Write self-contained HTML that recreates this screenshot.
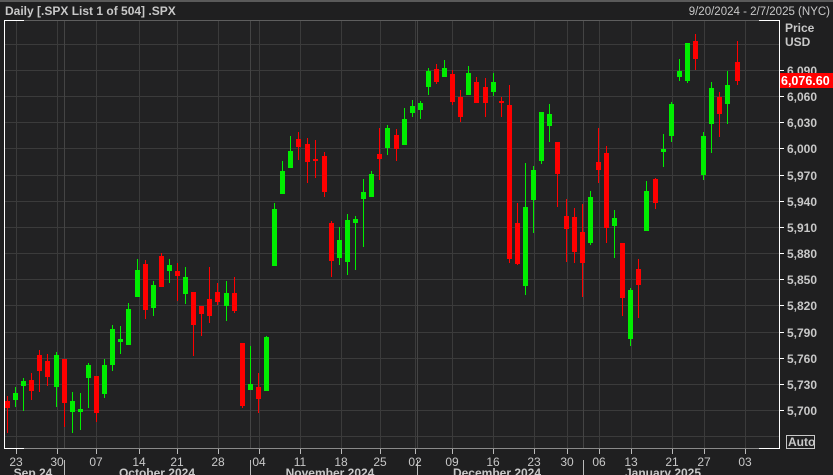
<!DOCTYPE html>
<html><head><meta charset="utf-8"><style>
html,body{margin:0;padding:0;background:#1f1f20;width:833px;height:475px;overflow:hidden}
svg{display:block}
text{font-family:"Liberation Sans",sans-serif;fill:#c8c8c8}
</style></head><body>
<svg id="s" width="833" height="475" xmlns="http://www.w3.org/2000/svg">
<rect x="0" y="0" width="833" height="475" fill="#1f1f20"/>
<rect x="0" y="0" width="833" height="2" fill="#5a5a5a"/>
<rect x="4" y="20" width="775" height="428" fill="#222223"/>
<g id="grid" stroke="#3b3b3b" stroke-width="1"></g>
<g id="c"></g>
<line x1="4" y1="20.5" x2="779" y2="20.5" stroke="#5e5e5e"/>
<line x1="4" y1="448.5" x2="779" y2="448.5" stroke="#8a8a8a"/>
<line x1="4.5" y1="20" x2="4.5" y2="448" stroke="#ffffff"/>
<line x1="4" y1="20.5" x2="24" y2="20.5" stroke="#ffffff"/>
<line x1="4" y1="448.5" x2="24" y2="448.5" stroke="#ffffff"/>
<line x1="759" y1="20.5" x2="779" y2="20.5" stroke="#ffffff"/>
<line x1="759" y1="448.5" x2="779" y2="448.5" stroke="#ffffff"/>
<line x1="779.5" y1="20" x2="779.5" y2="449" stroke="#ffffff"/>
<text x="5" y="15" font-size="12" font-weight="bold" fill="#c0c0c0">Daily [.SPX List 1 of 504] .SPX</text>
<text x="830" y="15" font-size="11.5" text-anchor="end" fill="#b8b8b8">9/20/2024 - 2/7/2025 (NYC)</text>
<text x="785" y="32" font-size="12" font-weight="bold">Price</text>
<text x="785" y="46" font-size="12" font-weight="bold">USD</text>
<g id="ax"></g>
<rect x="780" y="73" width="53" height="15" fill="#ff0000"/>
<text x="781" y="85" font-size="12.5" font-weight="bold" fill="#ffffff" style="fill:#fff">6,076.60</text>
<rect x="786.5" y="435.5" width="28" height="13" fill="none" stroke="#c8c8c8"/>
<text x="788" y="446" font-size="12" font-weight="bold">Auto</text>
</svg>
<script>
var NS="http://www.w3.org/2000/svg";
function el(p,t,a,txt){var e=document.createElementNS(NS,t);for(var k in a)e.setAttribute(k,a[k]);if(txt)e.textContent=txt;document.getElementById(p).appendChild(e);return e;}
var prices=["6,090","6,060","6,030","6,000","5,970","5,940","5,910","5,880","5,850","5,820","5,790","5,760","5,730","5,700"];
for(var i=0;i<15;i++){var y=Math.round(70+i*26.15)+0.5;el("grid","line",{x1:4,y1:y,x2:779,y2:y});
 if(i<14){el("ax","line",{x1:779,y1:y,x2:784,y2:y,stroke:"#fff"});el("ax","text",{x:787,y:y+4.5,"font-size":12,"font-weight":"bold"},prices[i]);}}
el("grid","line",{x1:4,y1:44.5,x2:779,y2:44.5});
var dx=[16,57,96,139,177,218,259,300,341,380,415,452,493,534,567,599,631,672,704,745];
var dl=["23","30","07","14","21","28","04","11","18","25","02","09","16","23","30","06","13","21","27","03"];
for(var i=0;i<dx.length;i++){var x=dx[i]+0.5;el("grid","line",{x1:x,y1:20,x2:x,y2:448});
 el("ax","line",{x1:x,y1:449,x2:x,y2:454,stroke:"#bbb"});el("ax","text",{x:dx[i],y:466,"font-size":12,"text-anchor":"middle"},dl[i]);}
[64,250,417,583].forEach(function(x){el("grid","line",{x1:x+0.5,y1:20,x2:x+0.5,y2:448,stroke:"#444"});el("ax","line",{x1:x+0.5,y1:460,x2:x+0.5,y2:475,stroke:"#bbb"});});
[["Sep 24",33],["October 2024",157],["November 2024",330],["December 2024",497],["January 2025",663]].forEach(function(m){el("ax","text",{x:m[1],y:477,"font-size":12,"font-weight":"bold","text-anchor":"middle"},m[0]);});
var d=[
[7,396,433,401,408,0],[15,387,407,393,400,1],[23,378,411,381,386,1],[31,373,400,380,391,0],[39,350,392,355,371,0],[47,354,386,361,377,0],[56,352,407,355,387,1],[64,359,427,359,403,0],[72,392,433,401,412,1],[80,393,430,409,412,1],[88,363,408,365,378,1],[96,376,422,376,413,0],[104,359,398,365,394,1],[112,325,371,329,365,1],[120,326,354,339,342,1],[128,303,345,309,345,1],[137,259,297,270,297,1],[145,260,319,264,310,0],[153,281,316,285,308,1],[161,253,287,256,287,0],[169,259,283,265,271,1],[177,263,301,271,276,0],[185,267,304,277,294,1],[193,292,356,292,325,0],[201,306,336,306,314,0],[209,267,323,299,316,0],[217,283,305,292,302,0],[226,281,321,293,306,1],[234,277,313,293,311,0],[242,343,408,343,406,0],[250,346,390,384,390,1],[258,373,413,387,399,0],[266,336,391,337,391,1],
[274,203,266,209,266,1],[282,161,194,171,194,1],[290,136,168,151,168,1],[298,132,160,139,147,0],[307,138,183,144,162,0],[315,140,178,159,161,0],[324,152,197,156,192,0],[331,221,277,223,261,0],[339,227,265,240,258,1],[347,214,275,220,262,1],[355,216,270,219,223,1],[363,179,247,192,199,1],[371,171,197,174,197,1],[379,128,180,154,159,0],[387,125,155,128,148,1],[396,129,161,135,149,0],[404,108,145,119,145,1],[412,100,117,106,113,1],[420,101,119,103,110,1],[428,68,95,71,87,1],[436,64,84,69,82,0],[444,60,77,68,77,1],[452,70,105,74,102,0],[460,90,122,97,117,0],[468,66,95,73,95,1],[476,77,103,82,103,0],[485,78,117,87,103,0],[493,73,96,82,92,1],[501,97,117,101,103,0],[509,85,263,105,259,0],[517,203,265,223,264,0],
[525,163,295,207,286,1],[533,166,233,170,200,1],[541,112,164,112,161,1],[549,104,142,114,126,1],[557,142,207,142,174,0],[566,199,262,216,229,0],[574,208,263,217,252,0],[582,204,297,232,263,0],[590,191,245,197,243,1],[598,128,183,162,170,0],[606,146,243,153,228,0],[614,210,258,218,226,1],[622,243,316,243,298,0],[630,288,346,290,339,1],[638,259,318,269,285,0],[646,181,231,191,231,1],[655,178,209,179,203,0],[663,134,167,149,152,1],[671,102,142,104,136,1],[679,59,81,71,77,1],[687,43,83,43,81,1],[695,34,70,41,59,0],[703,132,180,136,175,1],[711,82,153,88,124,1],[719,92,137,97,114,0],[727,71,124,85,104,1],[737,41,85,62,81,0]];
d.forEach(function(c){var col=c[5]?"#00ee00":"#ff0000";
 el("c","rect",{x:c[0],y:c[1],width:1,height:c[2]-c[1],fill:col});
 el("c","rect",{x:c[0]-2,y:c[3],width:5,height:Math.max(2,c[4]-c[3]),fill:col});});
</script>
</body></html>
